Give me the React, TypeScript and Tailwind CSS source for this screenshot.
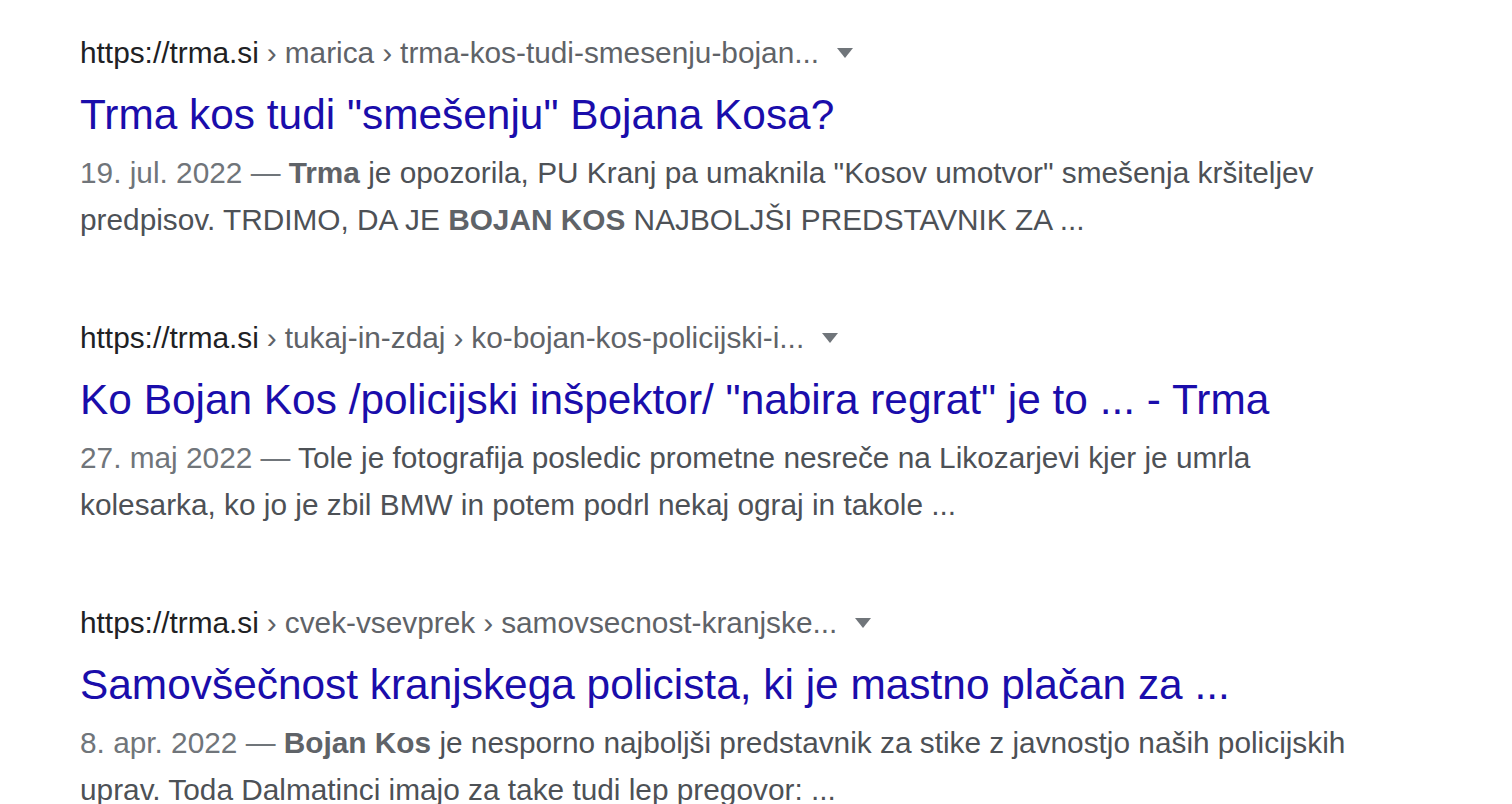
import React from 'react';

type Result = {
    crumbs: string[];
    title: string;
    date: string;
    snippet: React.ReactNode;
};

const results: Result[] = [
    {
        crumbs: ['marica', 'trma-kos-tudi-smesenju-bojan...'],
        title: 'Trma kos tudi "smešenju" Bojana Kosa?',
        date: '19. jul. 2022',
        snippet: (
            <>
                <b className="font-bold text-[#5f6368]">Trma</b> je opozorila, PU Kranj pa umaknila "Kosov umotvor" smešenja kršiteljev predpisov. TRDIMO, DA JE{' '}
                <b className="font-bold text-[#5f6368]">BOJAN KOS</b> NAJBOLJŠI PREDSTAVNIK ZA ...
            </>
        ),
    },
    {
        crumbs: ['tukaj-in-zdaj', 'ko-bojan-kos-policijski-i...'],
        title: 'Ko Bojan Kos /policijski inšpektor/ "nabira regrat" je to ... - Trma',
        date: '27. maj 2022',
        snippet: (
            <>
                Tole je fotografija posledic prometne nesreče na Likozarjevi kjer je umrla kolesarka, ko jo je zbil BMW in potem podrl nekaj ograj in takole ...
            </>
        ),
    },
    {
        crumbs: ['cvek-vsevprek', 'samovsecnost-kranjske...'],
        title: 'Samovšečnost kranjskega policista, ki je mastno plačan za ...',
        date: '8. apr. 2022',
        snippet: (
            <>
                <b className="font-bold text-[#5f6368]">Bojan Kos</b> je nesporno najboljši predstavnik za stike z javnostjo naših policijskih uprav. Toda Dalmatinci imajo za take tudi lep pregovor: ...
            </>
        ),
    },
];

function SearchResult({ result }: { result: Result }) {
    return (
        <div className="w-[1280px]">
            {/* URL row */}
            <div className="flex items-center h-[42px] text-[29.8px] leading-[42px]">
                <span className="text-[#202124]">https://trma.si</span>
                {result.crumbs.map((c, i) => (
                    <span key={i} className="text-[#5f6368]">
                        <span className="px-[8px]">›</span>
                        {c}
                    </span>
                ))}
                <span className="ml-[18px] w-0 h-0 border-l-[8px] border-r-[8px] border-t-[10px] border-l-transparent border-r-transparent border-t-[#70757a]" />
            </div>
            {/* Title */}
            <h3 className="mt-[13px] text-[42.4px] leading-[55px] text-[#1a0dab] font-normal">
                {result.title}
            </h3>
            {/* Snippet */}
            <div className="mt-[8px] text-[29.8px] leading-[46.5px] text-[#4d5156]">
                <span className="text-[#70757a]">{result.date} — </span>
                {result.snippet}
            </div>
        </div>
    );
}

export default function App() {
    return (
        <div
            className="min-h-screen bg-white pl-[80px] pt-[32px] flex flex-col gap-[74px]"
            style={{ fontFamily: '"Liberation Sans", Arial, sans-serif' }}
        >
            {results.map((r, i) => (
                <SearchResult key={i} result={r} />
            ))}
        </div>
    );
}
